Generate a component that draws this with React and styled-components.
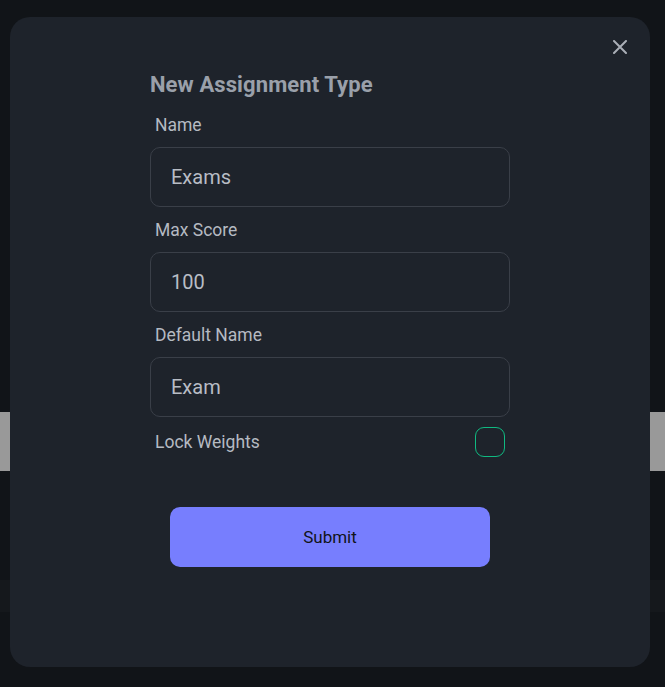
import styled, { createGlobalStyle } from "styled-components";

const GlobalStyle = createGlobalStyle`
  html, body {
    margin: 0;
    padding: 0;
    background: #111418;
    font-family: Roboto, "Liberation Sans", sans-serif;
  }
  * { box-sizing: border-box; }
`;

const Page = styled.div`
  position: relative;
  width: 665px;
  height: 687px;
  overflow: hidden;
  background: #111418;
`;

const BackdropStrip = styled.div`
  height: ${(p) => p.$h}px;
  margin-top: ${(p) => p.$top}px;
  background: ${(p) => p.$bg};
`;

const Modal = styled.div`
  position: absolute;
  left: 10px;
  top: 17px;
  width: 640px;
  height: 650px;
  border-radius: 20px;
  background: #1e232b;
  display: flex;
  justify-content: center;
  padding-top: 56px;
`;

const CloseButton = styled.button`
  position: absolute;
  top: 23px;
  right: 23px;
  width: 14px;
  height: 14px;
  padding: 0;
  border: none;
  background: none;
  color: #a9aeb6;
  cursor: pointer;
  display: flex;

  svg {
    width: 14px;
    height: 14px;
  }
`;

const Form = styled.form`
  width: 360px;
  display: flex;
  flex-direction: column;
`;

const Title = styled.h2`
  margin: 0 0 18px;
  font-size: 22px;
  line-height: 24px;
  font-weight: 700;
  color: #9aa0aa;
  letter-spacing: 0.1px;
`;

const Label = styled.label`
  display: block;
  padding-left: 5px;
  font-size: 17.5px;
  line-height: 20px;
  color: #b5bac2;
`;

const Field = styled.div`
  display: flex;
  flex-direction: column;
  gap: 12px;
  margin-bottom: 13px;
`;

const Input = styled.input`
  width: 100%;
  height: 60px;
  padding: 0 20px;
  border: 1px solid #3a3f48;
  border-radius: 10px;
  background: #1e232b;
  color: #b8bdc5;
  font-family: Roboto, "Liberation Sans", sans-serif;
  font-size: 20px;
  outline: none;
`;

const CheckRow = styled.div`
  display: flex;
  align-items: center;
  justify-content: space-between;
  padding-right: 5px;
  margin-top: -3px;
  margin-bottom: 50px;
`;

const Checkbox = styled.span`
  width: 30px;
  height: 30px;
  border: 1px solid #10b981;
  border-radius: 9px;
`;

const Submit = styled.button`
  align-self: center;
  width: 320px;
  height: 60px;
  border: none;
  border-radius: 10px;
  background: #777efe;
  color: #111418;
  font-family: Roboto, "Liberation Sans", sans-serif;
  font-size: 17px;
  cursor: pointer;
`;

function TextField({ label, value }) {
  return (
    <Field>
      <Label>{label}</Label>
      <Input defaultValue={value} />
    </Field>
  );
}

export default function App() {
  return (
    <>
      <GlobalStyle />
      <Page>
        <BackdropStrip $top={412} $h={59} $bg="#999999" />
        <BackdropStrip $top={109} $h={32} $bg="#15181c" />
        <Modal>
          <CloseButton type="button" aria-label="Close">
            <svg viewBox="0 0 14 14" fill="none" stroke="currentColor" strokeWidth="2" strokeLinecap="round">
              <path d="M1 1l12 12M13 1L1 13" />
            </svg>
          </CloseButton>
          <Form onSubmit={(e) => e.preventDefault()}>
            <Title>New Assignment Type</Title>
            <TextField label="Name" value="Exams" />
            <TextField label="Max Score" value="100" />
            <TextField label="Default Name" value="Exam" />
            <CheckRow>
              <Label>Lock Weights</Label>
              <Checkbox />
            </CheckRow>
            <Submit type="submit">Submit</Submit>
          </Form>
        </Modal>
      </Page>
    </>
  );
}
